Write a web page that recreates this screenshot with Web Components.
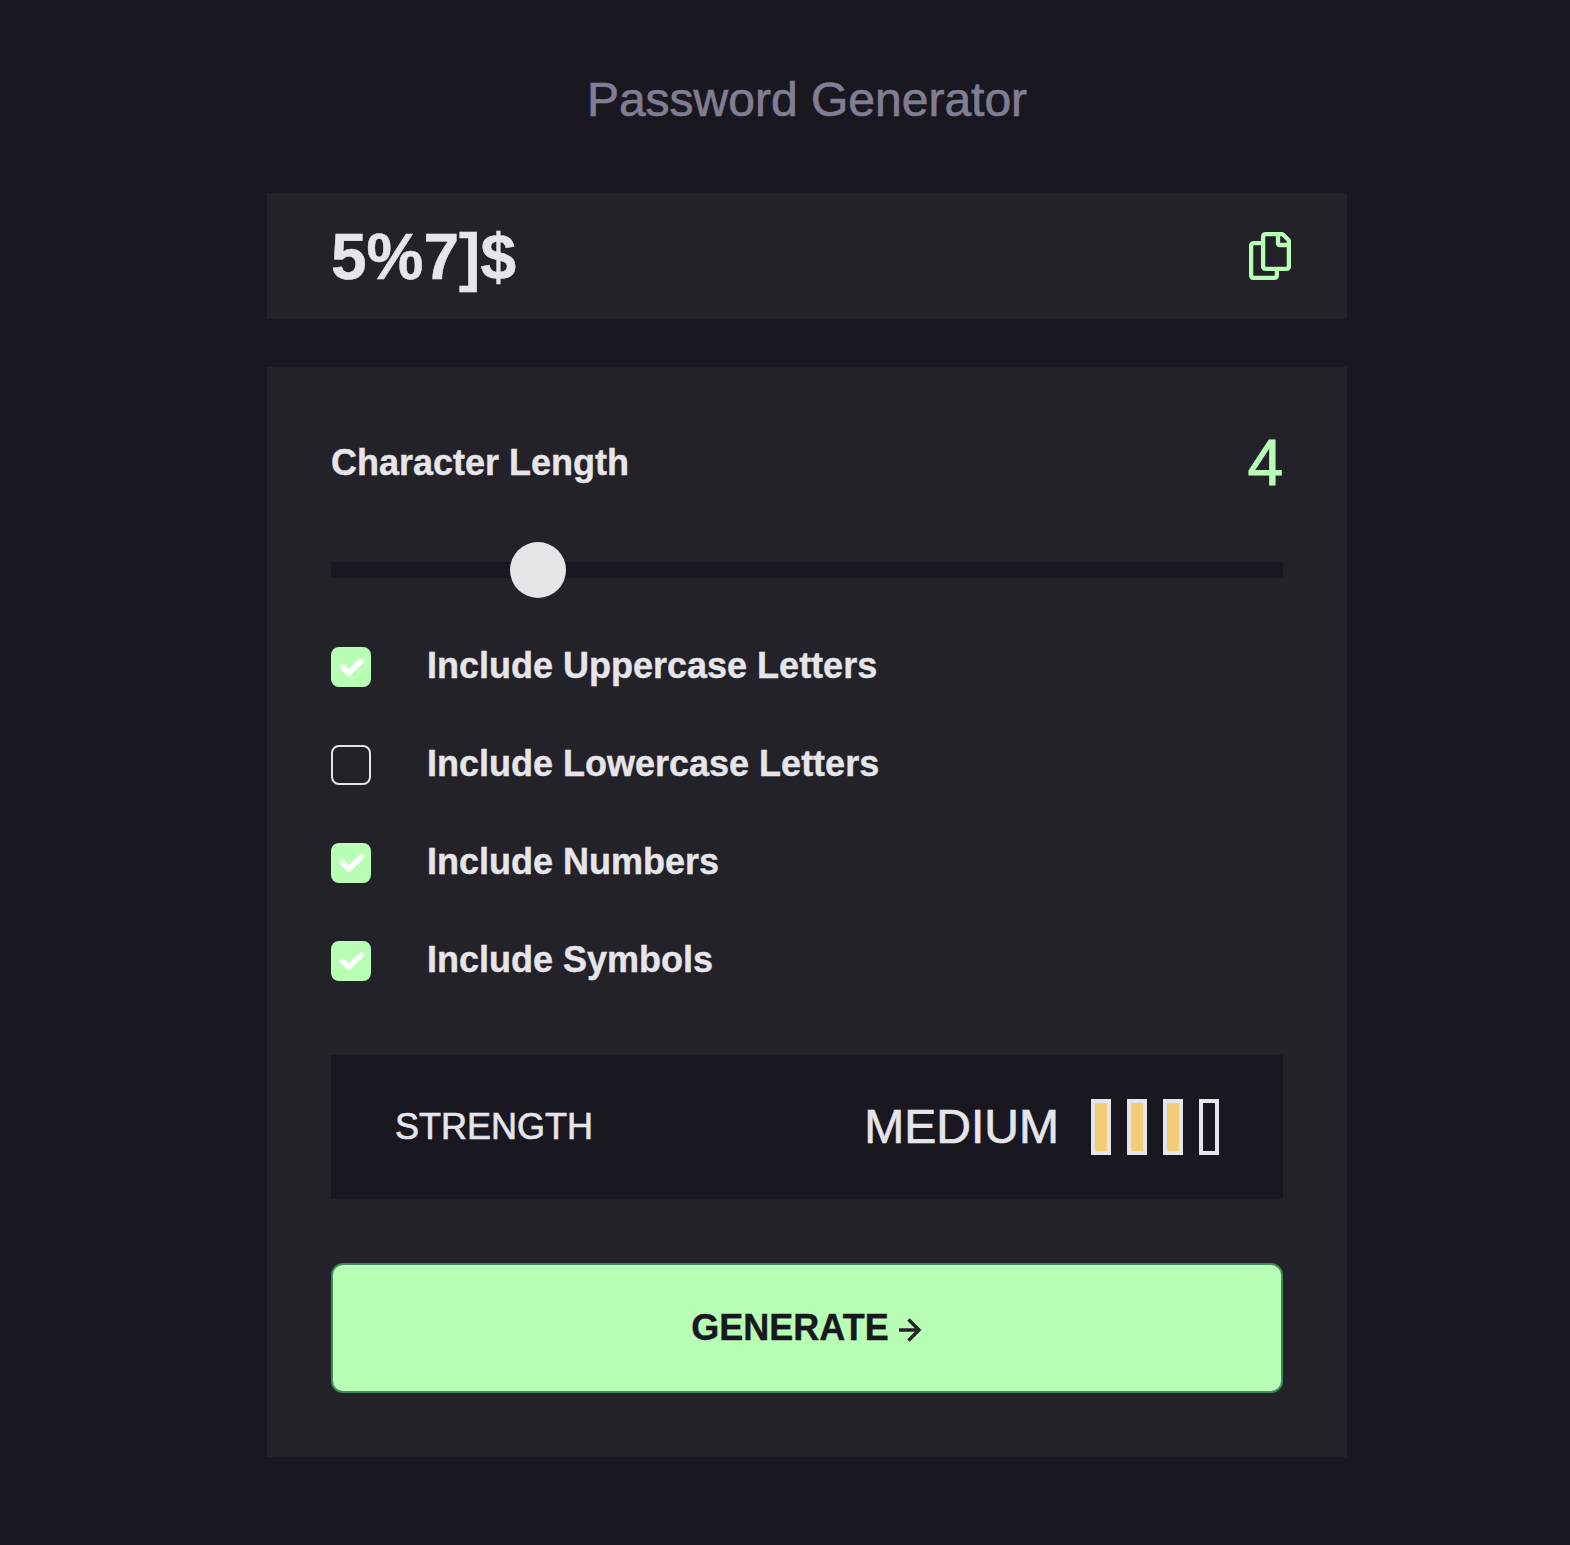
<!DOCTYPE html>
<html lang="en">
<head>
<meta charset="utf-8">
<title>Password Generator</title>
<style>
html,body{margin:0;padding:0;background:#191720;min-height:1545px;overflow:hidden}
</style>
</head>
<body>
<password-app></password-app>
<script>
const define=(name,html,setup)=>{
  const t=document.createElement('template');
  t.innerHTML=html;
  customElements.define(name,class extends HTMLElement{
    constructor(){
      super();
      this.attachShadow({mode:'open'}).append(t.content.cloneNode(true));
    }
    connectedCallback(){ if(setup) setup(this,this.shadowRoot); }
  });
};

define('password-output',`
<style>
:host{display:flex;align-items:center;justify-content:space-between;box-sizing:border-box;height:126px;padding:0 56px 0 64px;background:var(--panel)}
.value{font:700 64px/72px var(--font);padding-top:1px;-webkit-text-stroke:.5px}
button{border:0;background:none;padding:0;margin:0;display:flex;color:var(--green)}
</style>
<span class="value"><slot></slot></span>
<button aria-label="Copy"><svg width="42" height="48" viewBox="0 0 42 48" fill="none" stroke="currentColor" stroke-width="4.300" stroke-linejoin="round">
<path d="M13 11.100H5Q2.100 11.100 2.100 14V43Q2.100 45.900 5 45.900H25Q27.900 45.900 27.900 43V38"/>
<path d="M17 2.100H32.500Q33.500 2.100 34.500 3L39 7.500Q39.900 8.500 39.900 9.500V34Q39.900 36.900 37 36.900H17Q14.100 36.900 14.100 34V5Q14.100 2.100 17 2.100Z"/>
<path d="M29 3V11Q29 13 31 13H39"/>
</svg></button>`);

define('length-slider',`
<style>
:host{display:block}
.row{display:flex;justify-content:space-between;align-items:center;height:64px;font:700 36px/64px var(--font)}
output{font:400 64px/64px var(--font);color:var(--green);-webkit-text-stroke:.9px}
input{-webkit-appearance:none;appearance:none;display:block;width:100%;height:56px;margin:47px 0 0;background:linear-gradient(var(--bg),var(--bg)) center/100% 16px no-repeat;outline:none}
input::-webkit-slider-thumb{-webkit-appearance:none;width:56px;height:56px;border-radius:50%;background:var(--text)}
</style>
<div class="row"><span><slot></slot></span><output></output></div>
<input type="range" min="0" max="20" aria-label="Character Length">`,
(el,root)=>{
  const input=root.querySelector('input'),out=root.querySelector('output');
  input.value=el.getAttribute('value');
  const show=()=>out.textContent=input.value;
  input.addEventListener('input',show);
  show();
});

define('option-check',`
<style>
:host{display:block;height:40px}
label{display:flex;align-items:center;gap:56px;height:40px}
input{display:none}
.box{box-sizing:border-box;width:40px;height:40px;border:2px solid var(--text);border-radius:8px;display:flex;align-items:center;justify-content:center}
.box svg{visibility:hidden;flex:none}
input:checked+.box{background:var(--green);border-color:var(--green)}
input:checked+.box svg{visibility:visible}
.text{font:700 36px/40px var(--font);padding-bottom:3px}
</style>
<label><input type="checkbox"><span class="box"><svg width="40" height="40" viewBox="0 0 40 40" fill="none" stroke="#fff" stroke-width="5.400" stroke-linecap="round" stroke-linejoin="round"><path d="M11.900 20.200L17.900 26L30.200 14.200"/></svg></span><span class="text"><slot></slot></span></label>`,
(el,root)=>{ root.querySelector('input').checked=el.hasAttribute('checked'); });

define('strength-meter',`
<style>
:host{display:flex;align-items:center;justify-content:space-between;box-sizing:border-box;height:144px;padding:0 64px;background:var(--bg);-webkit-text-stroke:.7px}
.label{font:400 36px/42px var(--font)}
.right{display:flex;align-items:center;gap:32px}
.level{font:400 48px/56px var(--font)}
.bars{display:flex;gap:16px}
i{box-sizing:border-box;width:20px;height:56px;border:4px solid var(--text)}
i.on{background:#f2cf74}
</style>
<span class="label">STRENGTH</span>
<div class="right"><span class="level"><slot></slot></span><div class="bars"></div></div>`,
(el,root)=>{
  const n=+el.getAttribute('score');
  root.querySelector('.bars').replaceChildren(...[0,1,2,3].map(k=>{
    const b=document.createElement('i');
    if(k<n) b.className='on';
    return b;
  }));
});

define('generate-button',`
<style>
:host{display:block}
button{box-sizing:border-box;display:flex;align-items:center;justify-content:center;gap:10px;width:100%;height:130px;margin:0;padding:0;border:2px solid #3f8a5a;border-radius:12px;background:var(--green);color:var(--bg);font:700 36px/42px var(--font);-webkit-text-stroke:.4px}
svg{margin-top:4px}
</style>
<button><span><slot></slot></span><svg width="24" height="24" viewBox="0 0 24 24" fill="none" stroke="#24232a" stroke-width="3.400"><path d="M0 12H20M9.500 1.500L20 12L9.500 22.500"/></svg></button>`);

define('password-app',`
<style>
:host{--bg:#191720;--panel:#232228;--text:#e6e5ea;--green:#b8ffb5;--font:"Liberation Sans",Arial,sans-serif;
display:flex;flex-direction:column;width:1080px;box-sizing:border-box;padding-top:70px;margin-left:267px;color:var(--text);font-family:var(--font)}
h1{margin:0 0 63px;text-align:center;font:400 48px/60px var(--font);color:#817d92;-webkit-text-stroke:.7px}
.panel{display:flex;flex-direction:column;margin-top:48px;padding:64px;background:var(--panel)}
.options{display:flex;flex-direction:column;gap:58px;margin:49px 0 74px}
length-slider,option-check{-webkit-text-stroke:.4px}
generate-button{margin-top:64px}
</style>
<h1>Password Generator</h1>
<password-output>5%7]$</password-output>
<section class="panel">
<length-slider value="4">Character Length</length-slider>
<div class="options">
<option-check checked>Include Uppercase Letters</option-check>
<option-check>Include Lowercase Letters</option-check>
<option-check checked>Include Numbers</option-check>
<option-check checked>Include Symbols</option-check>
</div>
<strength-meter score="3">MEDIUM</strength-meter>
<generate-button>GENERATE</generate-button>
</section>`);
</script>
</body>
</html>
